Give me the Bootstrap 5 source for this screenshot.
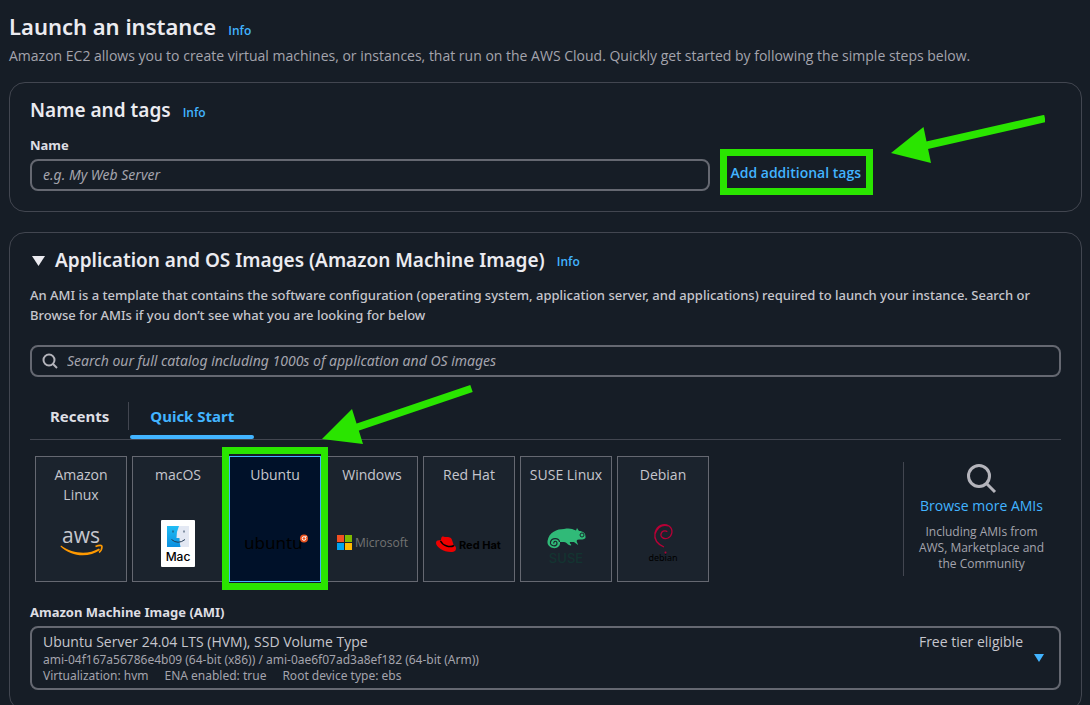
<!DOCTYPE html>
<html lang="en" data-bs-theme="dark">
<head>
<meta charset="utf-8">
<meta name="viewport" content="width=device-width, initial-scale=1">
<title>Launch an instance</title>
<link href="https://cdn.jsdelivr.net/npm/bootstrap@5.3.0/dist/css/bootstrap.min.css" rel="stylesheet">
<style>
  body { background: #161d26; color: #c6c6cd; font: 14px/20px "Open Sans", sans-serif; }
  a { color: #42b4ff; text-decoration: none; }
  .page { padding: 12px 8px 40px 9px; }
  h1, h2, .desc { font-family: "Noto Sans", sans-serif; }
  h1 { font-size: 22px; line-height: 28px; font-weight: 600; color: #ebebf0; margin: 0; }
  h2 { font-size: 19px; line-height: 24px; font-weight: 600; color: #ebebf0; margin: 0; }
  .info { font-size: 12px; line-height: 16px; font-weight: 600; }
  .lede { color: #a4a4ad; margin: 6px 0 16px; }
  .panel { border: 1px solid #424650; border-radius: 16px; padding: 15px 20px 20px; margin-bottom: 20px; }
  .panel-head { margin-bottom: 13px; }
  .field-label { font: 700 13px/20px "Noto Sans", sans-serif; color: #dedee3; margin: 0; }
  .box, .box:focus { background: #161d26; border: 2px solid #656871; border-radius: 8px; color: #c6c6cd; font-size: 14px; line-height: 20px; padding: 4px 11px; box-shadow: none; }
  .box::placeholder { color: #a4a4ad; font-family: "Noto Sans", sans-serif; font-style: italic; opacity: 1; }
  .name-col { width: 66%; }
  .tags-btn { background: none; border: 0; padding: 3px 0 7px; color: #42b4ff; font-weight: 600; }
  .mark-frame { position: absolute; border: 7px solid #2ae500; pointer-events: none; z-index: 3; }
  .frame-tags { inset: -11px -12px -5px -10px; }
  .frame-tile { inset: -9px -7px -8px -7px; }
  .arrow { position: absolute; pointer-events: none; z-index: 4; fill: #2ae500; stroke: #2ae500; }
  .arrow-tags { right: 36px; top: 32px; }
  .arrow-tile { left: 312px; top: 151px; }
  .desc { font-size: 13px; font-weight: 500; margin: 0 0 20px; padding-right: 12px; }
  .search-icon { position: absolute; left: 12px; top: 8px; }
  .search-input, .search-input:focus { padding-left: 35px; }
  .tabs { border-bottom: 1px solid #424650; margin: 21px 0 16px; }
  .tab-item { background: none; border: 0; font: 700 15px/20px "Noto Sans", sans-serif; color: #dedee3; padding: 8px 20px 13px; position: relative; }
  .tab-item + .tab-item { margin-left: 1px; color: #42b4ff; }
  .tab-item.first::after { content: ""; position: absolute; right: 0; top: 4px; height: 28px; border-right: 1px solid #424650; }
  .tab-item.current::after { content: ""; position: absolute; left: 0; right: 0; bottom: 0; height: 4px; border-radius: 2px; background: #42b4ff; }
  .tiles { gap: 5px; padding-left: 5px; }
  .tile { width: 92px; height: 126px; border: 1px solid #656871; background: #1b232d; color: #c6c6cd; text-align: center; padding: 8px 4px; cursor: pointer; }
  .btn-check:checked + .tile { background: #001129; border-color: #42b4ff; }
  .logo { position: absolute; left: 0; top: 52px; width: 90px; height: 68px; }
  .browse { width: 158px; border-left: 1px solid #424650; margin: 6px 0; padding-right: 2px; text-align: center; }
  .browse a { padding-top: 2px; }
  .note { font-size: 12px; line-height: 16px; color: #a4a4ad; }
  .ami { text-align: left; padding: 4px 36px 4px 11px; }
  .ami-meta { font: 12px/16px "Noto Sans", sans-serif; color: #a4a4ad; }
  .caret { position: absolute; right: 15px; top: 26px; }
</style>
</head>
<body>
<main class="page">
  <header>
    <div class="d-flex align-items-baseline gap-2"><h1>Launch an instance</h1><a href="#" class="info ms-1">Info</a></div>
    <p class="lede">Amazon EC2 allows you to create virtual machines, or instances, that run on the AWS Cloud. Quickly get started by following the simple steps below.</p>
  </header>

  <section class="panel position-relative">
    <div class="panel-head d-flex align-items-baseline gap-2"><h2>Name and tags</h2><a href="#" class="info ms-1">Info</a></div>
    <label class="field-label d-block mb-1" for="name">Name</label>
    <div class="d-flex align-items-center">
      <div class="name-col"><input id="name" type="text" class="form-control box" placeholder="e.g. My Web Server"></div>
      <div class="ms-3 ps-1"><span class="position-relative d-inline-block"><button type="button" class="tags-btn">Add additional tags</button><span class="mark-frame frame-tags"></span></span></div>
    </div>
    <svg class="arrow arrow-tags" width="154" height="50" viewBox="891 115 154 50" aria-hidden="true"><path stroke="none" d="M891 153 923.500 127 931 163Z"/><path stroke-width="7.500" d="M926 145.500 1045 118.500"/></svg>
  </section>

  <section class="panel position-relative">
    <div class="panel-head d-flex align-items-baseline gap-2">
      <h2 class="d-flex align-items-center"><svg class="me-2" width="17" height="12" viewBox="0 0 17 12" aria-hidden="true"><path d="M2 2H15L8.500 12Z" fill="#ebebf0"/></svg>Application and OS Images (Amazon Machine Image)</h2>
      <a href="#" class="info ms-1">Info</a>
    </div>
    <p class="desc">An AMI is a template that contains the software configuration (operating system, application server, and applications) required to launch your instance. Search or Browse for AMIs if you don’t see what you are looking for below</p>
    <div class="position-relative">
      <svg class="search-icon" width="16" height="16" viewBox="0 0 16 16" fill="none" stroke="#b4b4bb" stroke-width="2" aria-hidden="true"><circle cx="7" cy="7" r="5.500"/><path d="M11 11l4 4"/></svg>
      <input type="search" class="form-control box search-input" aria-label="Search images" placeholder="Search our full catalog including 1000s of application and OS images">
    </div>
    <div class="tabs d-flex" role="tablist">
      <button type="button" role="tab" class="tab-item first">Recents</button>
      <button type="button" role="tab" class="tab-item current" aria-selected="true">Quick Start</button>
    </div>
    <svg class="arrow arrow-tile" width="152" height="62" viewBox="322 384 152 62" aria-hidden="true"><path stroke="none" d="M322 439 352 409 363 444Z"/><path stroke-width="7.500" d="M355 428 471.500 388.500"/></svg>

    <div class="d-flex justify-content-between">
      <div class="tiles d-flex">
        <div><input class="btn-check" type="radio" name="os" id="os1"><label class="tile position-relative" for="os1">Amazon<br>Linux
          <svg class="logo" viewBox="0 0 90 68"><text x="45" y="34" text-anchor="middle" font-family="Open Sans, sans-serif" font-size="21" font-weight="500" fill="#c6c6cd">aws</text><path d="M25 36.500C37 45 52 46 63 39.500L64 41C53 49 35 48 24.500 37.500Z" fill="#f90"/><path d="M59.500 37.500C63 36 66 36 66 37.500S65 42 63 43.500" fill="none" stroke="#f90" stroke-width="1.600"/></svg></label></div>
        <div><input class="btn-check" type="radio" name="os" id="os2"><label class="tile position-relative" for="os2">macOS
          <svg class="logo" viewBox="0 0 90 68"><defs><linearGradient id="mb" x1="0" y1="0" x2="0" y2="1"><stop offset="0" stop-color="#20bdf5"/><stop offset="1" stop-color="#0b8fdf"/></linearGradient></defs><rect x="28" y="11" width="34" height="47" rx="1" fill="#fff"/><rect x="34" y="17" width="22" height="21" fill="url(#mb)"/><path d="M46 17H56V38H47.500Q46.500 34 46.500 29H43.500Q43.500 22 46 17Z" fill="#e3e8f3"/><path d="M40 21.500v2M51 21.500v2M38.500 30.500Q45 36 52 30.500" fill="none" stroke="#223a55"/><text x="45" y="52" text-anchor="middle" font-family="Inter, sans-serif" font-size="12" font-weight="500" fill="#000">Mac</text></svg></label></div>
        <div class="position-relative"><input class="btn-check" type="radio" name="os" id="os3" checked><label class="tile position-relative" for="os3">Ubuntu
          <svg class="logo" viewBox="0 0 90 68"><text x="14" y="40" font-family="Noto Sans, sans-serif" font-size="17" fill="#000">ubuntu</text><circle cx="74" cy="29.500" r="4" fill="#e95420"/><circle cx="74" cy="29.500" r="1.800" fill="none" stroke="#fff"/><circle cx="76" cy="27.500" r=".7" fill="#fff"/></svg></label><span class="mark-frame frame-tile"></span></div>
        <div><input class="btn-check" type="radio" name="os" id="os4"><label class="tile position-relative" for="os4">Windows
          <svg class="logo" viewBox="0 0 90 68"><path fill="#f25022" d="M10 26h7v7h-7z"/><path fill="#7fba00" d="M18 26h7v7h-7z"/><path fill="#00a4ef" d="M10 34h7v7h-7z"/><path fill="#ffb900" d="M18 34h7v7h-7z"/><text x="28" y="38" font-family="Open Sans, sans-serif" font-size="12" font-weight="500" fill="#737373">Microsoft</text></svg></label></div>
        <div><input class="btn-check" type="radio" name="os" id="os5"><label class="tile position-relative" for="os5">Red Hat
          <svg class="logo" viewBox="0 0 90 68"><path d="M12 34C12 31 15 31 17 31.500L31 37C33 39 32 43 28 43C20 43.500 12 38 12 34Z" fill="#e00"/><path d="M17 30C18 26 19 28 22 28C25 28 27 28 28 31L30 37C26 40 18 36 17 33Z" fill="#e00"/><path d="M16.500 32C19 37 26 39 30 36.500" fill="none" stroke="#000" stroke-width="1.500"/><text x="35" y="40" font-family="Inter, sans-serif" font-size="11" font-weight="700" fill="#000">Red Hat</text></svg></label></div>
        <div><input class="btn-check" type="radio" name="os" id="os6"><label class="tile position-relative" for="os6">SUSE Linux
          <svg class="logo" viewBox="0 0 90 68"><path d="M26.500 32C28 23 36 20 43 20C49 19 51 20 55 21.500L56 19L58 22C62 22 65 24 64.500 29C62 31.500 58 30 56 31C55 33 57 34 57 36L53 33H49C48 35 51 35 50 36.500C46 36 46 33 43 33H39C40 41 28 41 26.500 34Z" fill="#30ba78"/><path d="M38.500 33C38 28.500 30.500 28.500 29.500 33S36 38 36 34.500 32 32 33 34.500" fill="none" stroke="#1b232d" stroke-width="1.200"/><circle cx="61" cy="26" r="2" fill="#30ba78" stroke="#1b232d"/><text x="45" y="54" text-anchor="middle" font-family="Inter, sans-serif" font-size="13" font-weight="500" fill="#133431">SUSE</text></svg></label></div>
        <div><input class="btn-check" type="radio" name="os" id="os7"><label class="tile position-relative" for="os7">Debian
          <svg class="logo" viewBox="0 0 90 68"><path d="M46 38C39 35 36 30 37 24C39 16 46 14 51 17C56 21 54 27 50 29C45 31 41 27 44 23C46 21 49 22 49 23M37 25C40 17 45 15 51 17" fill="none" stroke="#b80036" stroke-width="1.300"/><text x="45" y="52" text-anchor="middle" font-family="Noto Sans, sans-serif" font-size="9" fill="#000">debian</text><circle cx="47.500" cy="43.500" r="1" fill="#b80036"/></svg></label></div>
      </div>
      <div class="browse">
        <svg width="32" height="32" viewBox="0 0 32 32" fill="none" stroke="#b4b4bb" stroke-width="3" aria-hidden="true"><circle cx="13" cy="14" r="10.500"/><path d="M20.500 21.500 29 30"/></svg>
        <a href="#" class="d-block">Browse more AMIs</a>
        <div class="note mt-2">Including AMIs from<br>AWS, Marketplace and<br>the Community</div>
      </div>
    </div>

    <div class="field-label mt-3 mb-1 pt-1" id="amiLabel">Amazon Machine Image (AMI)</div>
    <button type="button" class="box ami w-100 position-relative d-block" aria-haspopup="listbox" aria-labelledby="amiLabel">
      <span class="d-flex justify-content-between"><span>Ubuntu Server 24.04 LTS (HVM), SSD Volume Type</span><span>Free tier eligible</span></span>
      <span class="ami-meta d-block">ami-04f167a56786e4b09 (64-bit (x86)) / ami-0ae6f07ad3a8ef182 (64-bit (Arm))</span>
      <span class="ami-meta d-flex gap-3"><span>Virtualization: hvm</span><span>ENA enabled: true</span><span>Root device type: ebs</span></span>
      <svg class="caret" width="10" height="8" viewBox="0 0 10 8" aria-hidden="true"><path d="M0 0H10L5 8Z" fill="#42b4ff"/></svg>
    </button>
  </section>
</main>
<script src="https://cdn.jsdelivr.net/npm/bootstrap@5.3.0/dist/js/bootstrap.bundle.min.js"></script>
</body>
</html>
